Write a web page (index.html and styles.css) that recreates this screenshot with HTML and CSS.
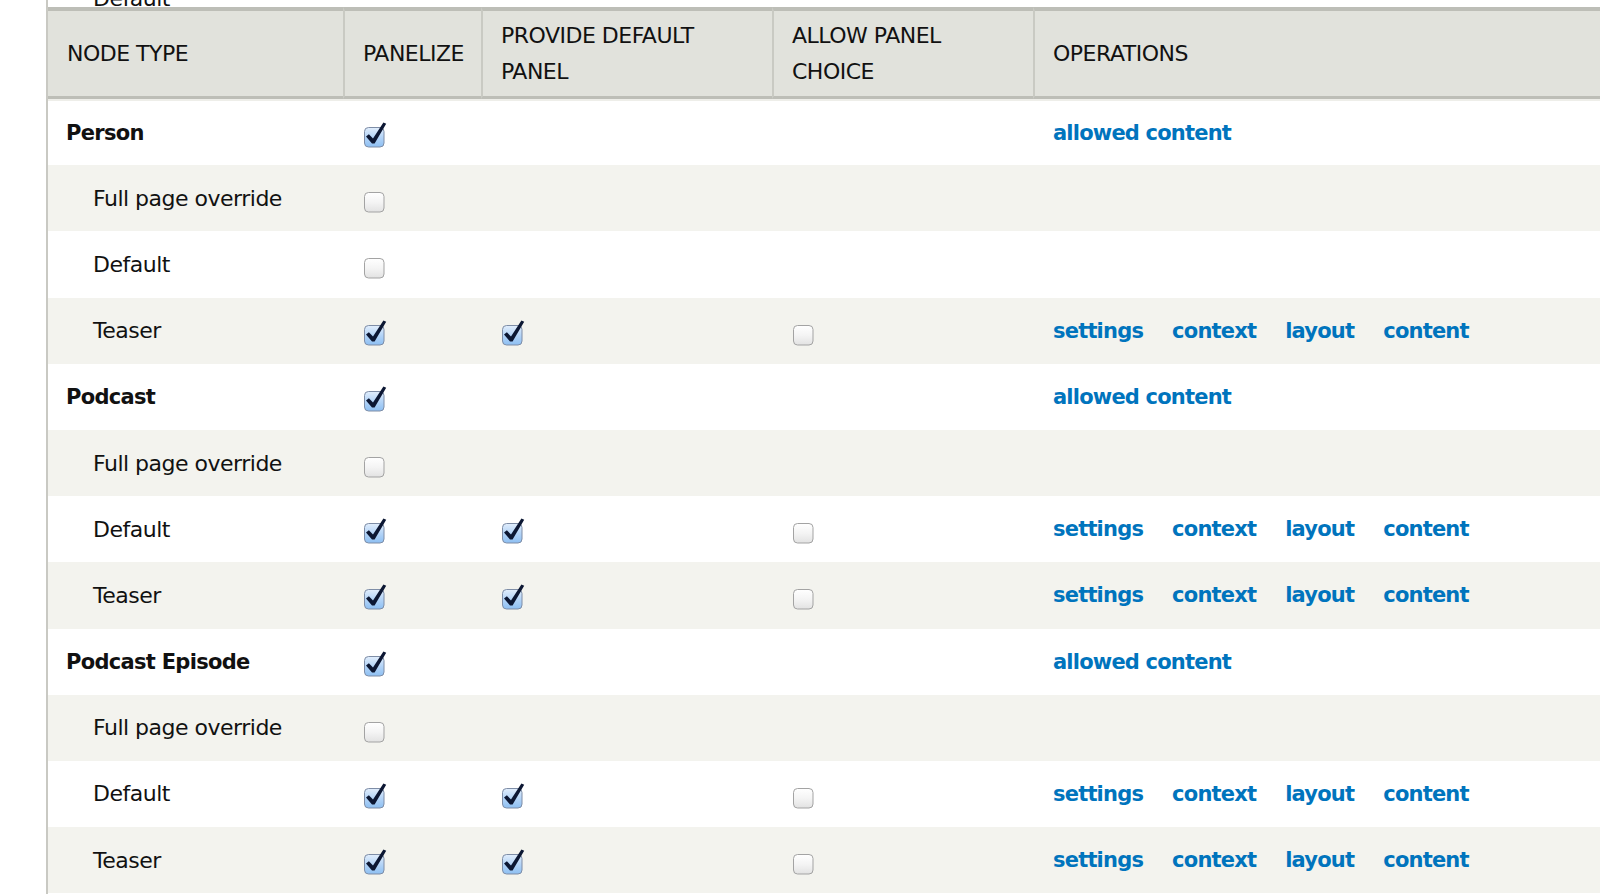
FILE: index.html
```html
<!DOCTYPE html>
<html lang="en">
<head>
    <meta charset="UTF-8">
    <title>Panelizer</title>
    <link rel="stylesheet" href="styles.css">
</head>
<body>
    <!-- shared gradients for the checkbox pictures -->
    <svg class="defs" width="0" height="0">
        <defs>
            <linearGradient id="cb-on" x1="0" y1="0" x2="0" y2="1">
                <stop offset="0" stop-color="#e2eefc"/>
                <stop offset="0.5" stop-color="#b4d4f7"/>
                <stop offset="1" stop-color="#8dbff2"/>
            </linearGradient>
            <linearGradient id="cb-off" x1="0" y1="0" x2="0" y2="1">
                <stop offset="0" stop-color="#ffffff"/>
                <stop offset="0.5" stop-color="#f4f4f4"/>
                <stop offset="1" stop-color="#e2e2e2"/>
            </linearGradient>
        </defs>
    </svg>

    <div class="page">
        <div class="prev"><span>Default</span></div>

        <table class="panelizer">
            <colgroup>
                <col class="c-type">
                <col class="c-panelize">
                <col class="c-default">
                <col class="c-choice">
                <col>
            </colgroup>
            <thead>
                <tr>
                    <th>Node type</th>
                    <th>Panelize</th>
                    <th>Provide default panel</th>
                    <th>Allow panel choice</th>
                    <th>Operations</th>
                </tr>
            </thead>
            <tbody>
                <tr class="odd">
                    <td class="type">Person</td>
                    <td><svg class="cb" viewBox="0 -5 24 26" width="24" height="26"><rect x="0.5" y="0.5" width="19.5" height="19.5" rx="4" fill="url(#cb-on)" stroke="#7e8da6"/><path d="M2,9.6 L4.9,7.2 L9,11.6 L19.4,-4.6 L22.2,-3.2 L10.6,16.6 L8,16.6 Z" fill="#0c1733"/></svg></td>
                    <td></td>
                    <td></td>
                    <td><div class="ops"><a href="#">allowed content</a></div></td>
                </tr>
                <tr class="even">
                    <td class="sub">Full page override</td>
                    <td><svg class="cb" viewBox="0 -5 24 26" width="24" height="26"><rect x="0.5" y="0.5" width="19.5" height="19.5" rx="4" fill="url(#cb-off)" stroke="#a3a3a3"/></svg></td>
                    <td></td>
                    <td></td>
                    <td></td>
                </tr>
                <tr class="odd">
                    <td class="sub">Default</td>
                    <td><svg class="cb" viewBox="0 -5 24 26" width="24" height="26"><rect x="0.5" y="0.5" width="19.5" height="19.5" rx="4" fill="url(#cb-off)" stroke="#a3a3a3"/></svg></td>
                    <td></td>
                    <td></td>
                    <td></td>
                </tr>
                <tr class="even">
                    <td class="sub">Teaser</td>
                    <td><svg class="cb" viewBox="0 -5 24 26" width="24" height="26"><rect x="0.5" y="0.5" width="19.5" height="19.5" rx="4" fill="url(#cb-on)" stroke="#7e8da6"/><path d="M2,9.6 L4.9,7.2 L9,11.6 L19.4,-4.6 L22.2,-3.2 L10.6,16.6 L8,16.6 Z" fill="#0c1733"/></svg></td>
                    <td><svg class="cb" viewBox="0 -5 24 26" width="24" height="26"><rect x="0.5" y="0.5" width="19.5" height="19.5" rx="4" fill="url(#cb-on)" stroke="#7e8da6"/><path d="M2,9.6 L4.9,7.2 L9,11.6 L19.4,-4.6 L22.2,-3.2 L10.6,16.6 L8,16.6 Z" fill="#0c1733"/></svg></td>
                    <td><svg class="cb" viewBox="0 -5 24 26" width="24" height="26"><rect x="0.5" y="0.5" width="19.5" height="19.5" rx="4" fill="url(#cb-off)" stroke="#a3a3a3"/></svg></td>
                    <td><div class="ops"><a href="#">settings</a><a href="#">context</a><a href="#">layout</a><a href="#">content</a></div></td>
                </tr>

                <tr class="odd">
                    <td class="type">Podcast</td>
                    <td><svg class="cb" viewBox="0 -5 24 26" width="24" height="26"><rect x="0.5" y="0.5" width="19.5" height="19.5" rx="4" fill="url(#cb-on)" stroke="#7e8da6"/><path d="M2,9.6 L4.9,7.2 L9,11.6 L19.4,-4.6 L22.2,-3.2 L10.6,16.6 L8,16.6 Z" fill="#0c1733"/></svg></td>
                    <td></td>
                    <td></td>
                    <td><div class="ops"><a href="#">allowed content</a></div></td>
                </tr>
                <tr class="even">
                    <td class="sub">Full page override</td>
                    <td><svg class="cb" viewBox="0 -5 24 26" width="24" height="26"><rect x="0.5" y="0.5" width="19.5" height="19.5" rx="4" fill="url(#cb-off)" stroke="#a3a3a3"/></svg></td>
                    <td></td>
                    <td></td>
                    <td></td>
                </tr>
                <tr class="odd">
                    <td class="sub">Default</td>
                    <td><svg class="cb" viewBox="0 -5 24 26" width="24" height="26"><rect x="0.5" y="0.5" width="19.5" height="19.5" rx="4" fill="url(#cb-on)" stroke="#7e8da6"/><path d="M2,9.6 L4.9,7.2 L9,11.6 L19.4,-4.6 L22.2,-3.2 L10.6,16.6 L8,16.6 Z" fill="#0c1733"/></svg></td>
                    <td><svg class="cb" viewBox="0 -5 24 26" width="24" height="26"><rect x="0.5" y="0.5" width="19.5" height="19.5" rx="4" fill="url(#cb-on)" stroke="#7e8da6"/><path d="M2,9.6 L4.9,7.2 L9,11.6 L19.4,-4.6 L22.2,-3.2 L10.6,16.6 L8,16.6 Z" fill="#0c1733"/></svg></td>
                    <td><svg class="cb" viewBox="0 -5 24 26" width="24" height="26"><rect x="0.5" y="0.5" width="19.5" height="19.5" rx="4" fill="url(#cb-off)" stroke="#a3a3a3"/></svg></td>
                    <td><div class="ops"><a href="#">settings</a><a href="#">context</a><a href="#">layout</a><a href="#">content</a></div></td>
                </tr>
                <tr class="even">
                    <td class="sub">Teaser</td>
                    <td><svg class="cb" viewBox="0 -5 24 26" width="24" height="26"><rect x="0.5" y="0.5" width="19.5" height="19.5" rx="4" fill="url(#cb-on)" stroke="#7e8da6"/><path d="M2,9.6 L4.9,7.2 L9,11.6 L19.4,-4.6 L22.2,-3.2 L10.6,16.6 L8,16.6 Z" fill="#0c1733"/></svg></td>
                    <td><svg class="cb" viewBox="0 -5 24 26" width="24" height="26"><rect x="0.5" y="0.5" width="19.5" height="19.5" rx="4" fill="url(#cb-on)" stroke="#7e8da6"/><path d="M2,9.6 L4.9,7.2 L9,11.6 L19.4,-4.6 L22.2,-3.2 L10.6,16.6 L8,16.6 Z" fill="#0c1733"/></svg></td>
                    <td><svg class="cb" viewBox="0 -5 24 26" width="24" height="26"><rect x="0.5" y="0.5" width="19.5" height="19.5" rx="4" fill="url(#cb-off)" stroke="#a3a3a3"/></svg></td>
                    <td><div class="ops"><a href="#">settings</a><a href="#">context</a><a href="#">layout</a><a href="#">content</a></div></td>
                </tr>

                <tr class="odd">
                    <td class="type">Podcast Episode</td>
                    <td><svg class="cb" viewBox="0 -5 24 26" width="24" height="26"><rect x="0.5" y="0.5" width="19.5" height="19.5" rx="4" fill="url(#cb-on)" stroke="#7e8da6"/><path d="M2,9.6 L4.9,7.2 L9,11.6 L19.4,-4.6 L22.2,-3.2 L10.6,16.6 L8,16.6 Z" fill="#0c1733"/></svg></td>
                    <td></td>
                    <td></td>
                    <td><div class="ops"><a href="#">allowed content</a></div></td>
                </tr>
                <tr class="even">
                    <td class="sub">Full page override</td>
                    <td><svg class="cb" viewBox="0 -5 24 26" width="24" height="26"><rect x="0.5" y="0.5" width="19.5" height="19.5" rx="4" fill="url(#cb-off)" stroke="#a3a3a3"/></svg></td>
                    <td></td>
                    <td></td>
                    <td></td>
                </tr>
                <tr class="odd">
                    <td class="sub">Default</td>
                    <td><svg class="cb" viewBox="0 -5 24 26" width="24" height="26"><rect x="0.5" y="0.5" width="19.5" height="19.5" rx="4" fill="url(#cb-on)" stroke="#7e8da6"/><path d="M2,9.6 L4.9,7.2 L9,11.6 L19.4,-4.6 L22.2,-3.2 L10.6,16.6 L8,16.6 Z" fill="#0c1733"/></svg></td>
                    <td><svg class="cb" viewBox="0 -5 24 26" width="24" height="26"><rect x="0.5" y="0.5" width="19.5" height="19.5" rx="4" fill="url(#cb-on)" stroke="#7e8da6"/><path d="M2,9.6 L4.9,7.2 L9,11.6 L19.4,-4.6 L22.2,-3.2 L10.6,16.6 L8,16.6 Z" fill="#0c1733"/></svg></td>
                    <td><svg class="cb" viewBox="0 -5 24 26" width="24" height="26"><rect x="0.5" y="0.5" width="19.5" height="19.5" rx="4" fill="url(#cb-off)" stroke="#a3a3a3"/></svg></td>
                    <td><div class="ops"><a href="#">settings</a><a href="#">context</a><a href="#">layout</a><a href="#">content</a></div></td>
                </tr>
                <tr class="even">
                    <td class="sub">Teaser</td>
                    <td><svg class="cb" viewBox="0 -5 24 26" width="24" height="26"><rect x="0.5" y="0.5" width="19.5" height="19.5" rx="4" fill="url(#cb-on)" stroke="#7e8da6"/><path d="M2,9.6 L4.9,7.2 L9,11.6 L19.4,-4.6 L22.2,-3.2 L10.6,16.6 L8,16.6 Z" fill="#0c1733"/></svg></td>
                    <td><svg class="cb" viewBox="0 -5 24 26" width="24" height="26"><rect x="0.5" y="0.5" width="19.5" height="19.5" rx="4" fill="url(#cb-on)" stroke="#7e8da6"/><path d="M2,9.6 L4.9,7.2 L9,11.6 L19.4,-4.6 L22.2,-3.2 L10.6,16.6 L8,16.6 Z" fill="#0c1733"/></svg></td>
                    <td><svg class="cb" viewBox="0 -5 24 26" width="24" height="26"><rect x="0.5" y="0.5" width="19.5" height="19.5" rx="4" fill="url(#cb-off)" stroke="#a3a3a3"/></svg></td>
                    <td><div class="ops"><a href="#">settings</a><a href="#">context</a><a href="#">layout</a><a href="#">content</a></div></td>
                </tr>
            </tbody>
        </table>
    </div>
</body>
</html>
```

FILE: styles.css
```css
body {
    margin: 0;
    padding: 0;
    font-family: "DejaVu Sans", Verdana, sans-serif;
    color: #111;
    background-color: #fff;
}
.defs {
    position: absolute;
    width: 0;
    height: 0;
}
.page {
    margin-left: 46px;
    border-left: 2px solid #c9c9c3;
    height: 894px;
    overflow: hidden;
}
/* last row of the block above, scrolled mostly out of view */
.prev {
    height: 7px;
    overflow: hidden;
}
.prev span {
    display: block;
    margin-top: -14px;
    padding-left: 45px;
    font-size: 22px;
    line-height: 26px;
    letter-spacing: -0.5px;
}
.panelizer {
    width: 100%;
    table-layout: fixed;
    border-collapse: separate;
    border-spacing: 0;
}
.c-type { width: 295px; }
.c-panelize { width: 138px; }
.c-default { width: 291px; }
.c-choice { width: 261px; }
.panelizer th {
    background-color: #e1e2dc;
    border-top: 4px solid #bdbeb7;
    border-bottom: 3px solid #bdbeb7;
    padding: 7px 18px 6px 18px;
    text-align: left;
    vertical-align: middle;
    font-weight: normal;
    font-size: 22px;
    line-height: 36px;
    letter-spacing: -0.5px;
    text-transform: uppercase;
    color: #111;
}
.panelizer th:first-child {
    padding-left: 19px;
}
.panelizer th + th {
    border-left: 2px solid #c9cac3;
}
.panelizer tbody tr {
    height: 66.2px;
}
.panelizer tbody tr:first-child td {
    border-top: 2px solid #eeeee9;
}
.panelizer td {
    padding: 0 20px;
    vertical-align: middle;
    font-size: 22px;
    letter-spacing: -0.5px;
    white-space: nowrap;
}
.panelizer tr.even td {
    background-color: #f3f3ee;
}
.panelizer td.type {
    font-weight: bold;
    font-size: 21px;
    letter-spacing: -0.7px;
    padding-left: 18px;
}
.panelizer td.sub {
    padding-left: 45px;
}
.cb {
    display: block;
    margin-top: 4px;
    margin-left: 1px;
    overflow: visible;
}
.ops {
    display: flex;
    gap: 29px;
}
.ops a {
    color: #0074bd;
    font-weight: bold;
    font-size: 21px;
    letter-spacing: -0.8px;
    text-decoration: none;
}
```
